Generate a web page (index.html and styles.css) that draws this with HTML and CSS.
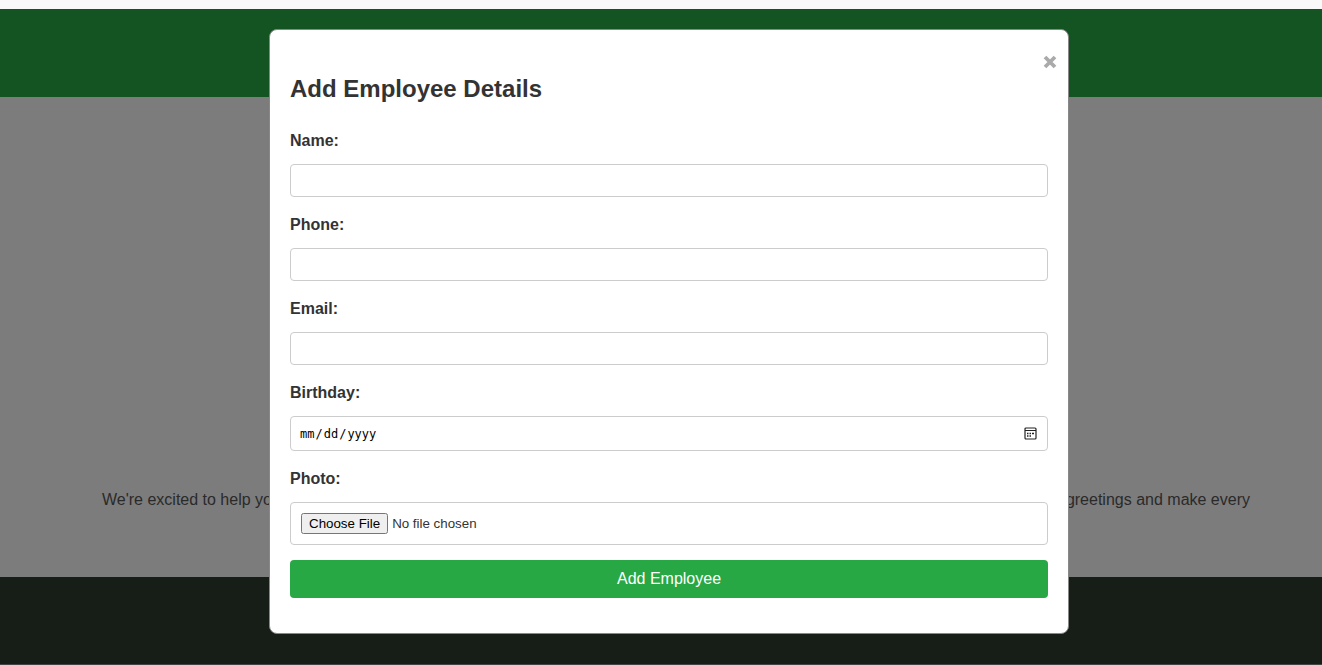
FILE: index.html
```html
<!DOCTYPE html>
<html lang="en">
<head>
<meta charset="utf-8">
<meta name="viewport" content="width=device-width, initial-scale=1">
<title>Add Employee Details</title>
<link rel="stylesheet" href="styles.css">
</head>
<body>
<div class="strip"></div>
<div class="page">
  <header class="header"></header>
  <main class="main">
    <p class="intro"><span>We're excited to help you</span> <span>greetings and make every</span></p>
  </main>
  <footer class="footer"></footer>
  <div class="overlay">
    <div class="modal" role="dialog" aria-labelledby="modal-title">
      <button class="close" type="button" aria-label="Close">
        <svg class="close-icon" viewBox="0 0 14 14" aria-hidden="true"><path d="M2 2L12 12M12 2L2 12" fill="none" stroke="currentColor" stroke-width="3.8"/></svg>
      </button>
      <h2 class="title" id="modal-title">Add Employee Details</h2>
      <form class="form">
        <label class="label" for="name">Name:</label>
        <input class="field" type="text" id="name">
        <label class="label" for="phone">Phone:</label>
        <input class="field" type="tel" id="phone">
        <label class="label" for="email">Email:</label>
        <input class="field" type="email" id="email">
        <label class="label" for="birthday">Birthday:</label>
        <input class="field field-date" type="date" id="birthday">
        <label class="label" for="photo">Photo:</label>
        <input class="field field-file" type="file" id="photo">
        <button class="submit" type="submit">Add Employee</button>
      </form>
    </div>
  </div>
</div>
</body>
</html>
```
FILE: styles.css
```css
* {
  box-sizing: border-box;
}

body {
  margin: 0;
  min-height: 100vh;
  display: flex;
  flex-direction: column;
  background: #f9f9f9;
  color: #333;
  font: 16px/26px "Liberation Sans", Arial, sans-serif;
}

.strip {
  height: 9px;
}

.page {
  position: relative;
  flex: 1;
  display: flex;
  flex-direction: column;
}

.header {
  height: 88px;
  background: #28a745;
}

.main {
  flex: 1;
  display: flex;
  flex-direction: column;
  justify-content: flex-end;
  padding: 0 72px 64px 102px;
}

.intro {
  display: flex;
  justify-content: space-between;
  margin: 0;
  color: #555;
}

.footer {
  height: 88px;
  background: #2e3c30;
  border-bottom: 1px solid #888;
}

.overlay {
  position: absolute;
  inset: 0;
  padding: 20px 0 0 16px;
  background: rgba(0, 0, 0, 0.5);
}

.modal {
  position: relative;
  width: 90%;
  max-width: 800px;
  margin: 0 auto;
  padding: 20px;
  background: #fff;
  border: 1px solid #888;
  border-radius: 8px;
}

.close {
  position: absolute;
  top: 25px;
  right: 11px;
  padding: 0;
  border: 0;
  background: none;
  color: #aaa;
  cursor: pointer;
}

.close-icon {
  display: block;
  width: 14px;
  height: 14px;
}

.title {
  margin: 20px 0;
  font-size: 24px;
  line-height: 38px;
}

.form {
  display: flex;
  flex-direction: column;
  padding-bottom: 15px;
}

.label {
  margin-bottom: 10px;
  font-weight: bold;
}

.field {
  width: 100%;
  height: 33px;
  margin: 0 0 15px;
  padding: 8px;
  border: 1px solid #ccc;
  border-radius: 4px;
  background: #fff;
  font-family: "Liberation Sans", Arial, sans-serif;
}

.field-date {
  height: 35px;
  color: #000;
  font-family: "DejaVu Sans Mono", monospace;
  font-size: 12px;
}

.field-date::-webkit-calendar-picker-indicator {
  width: 13px;
  height: 13px;
  padding: 0 2px;
  background: url("data:image/svg+xml,%3Csvg xmlns='http://www.w3.org/2000/svg' viewBox='0 0 13 13'%3E%3Crect x='1' y='1' width='11' height='11' rx='1' fill='none' stroke='%23222' stroke-width='1.2'/%3E%3Cpath d='M1 3.5h11' stroke='%23222'/%3E%3Cpath d='M3 6.5h1.5M5.5 6.5h1.5M8 6.5h2M3 9h1.5M5.5 9h1.5' stroke='%23222' stroke-width='1.4'/%3E%3C/svg%3E") center / 13px 13px no-repeat;
}

.field-file {
  height: 43px;
  padding: 10px;
  color: #333;
}

.submit {
  padding: 10px;
  border: 0;
  border-radius: 4px;
  background: #28a745;
  color: #fff;
  font: 16px/18px "Liberation Sans", Arial, sans-serif;
  cursor: pointer;
}
```
